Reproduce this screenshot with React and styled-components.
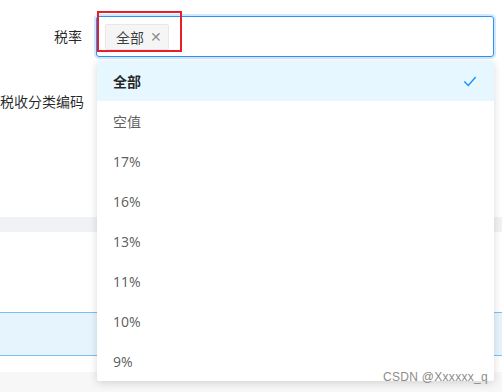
import React from 'react';
import styled, { createGlobalStyle } from 'styled-components';

const GlobalStyle = createGlobalStyle`
  html, body {
    margin: 0;
    padding: 0;
    background: #fff;
    overflow: hidden;
  }
  body {
    font-family: "Noto Sans", "Noto Sans CJK SC", sans-serif;
    font-size: 14px;
  }
`;

const Page = styled.div`
  position: relative;
  width: 502px;
  height: 392px;
  overflow: hidden;
  display: flex;
  flex-direction: column;
`;

const FormArea = styled.div`
  height: 218px;
  padding-top: 16px;
  box-sizing: border-box;
  display: flex;
  flex-direction: column;
  gap: 24px;
`;

const FormRow = styled.div`
  display: flex;
  align-items: center;
  gap: 14px;
  height: 41px;
`;

const Label = styled.div`
  width: 82px;
  flex: none;
  text-align: right;
  white-space: nowrap;
  color: rgba(0, 0, 0, 0.85);
  font-size: 14px;
  line-height: 22px;
`;

const SelectBox = styled.div`
  position: relative;
  width: 398px;
  height: 41px;
  box-sizing: border-box;
  border: 1px solid #2f8ff5;
  border-radius: 3px;
  box-shadow: 0 0 0 2px rgba(24, 144, 255, 0.2);
  display: flex;
  align-items: center;
  padding-left: 8px;
`;

const Tag = styled.span`
  display: inline-flex;
  align-items: center;
  gap: 6px;
  height: 26px;
  box-sizing: border-box;
  padding: 0 6px 0 10px;
  background: #f5f5f5;
  border: 1px solid #e8e8e8;
  border-radius: 2px;
  color: rgba(0, 0, 0, 0.75);
  font-size: 14px;
`;

const Close = styled.span`
  color: rgba(0, 0, 0, 0.45);
  font-size: 14px;
  line-height: 1;
`;

const Highlight = styled.div`
  position: absolute;
  left: 0;
  top: -6px;
  width: 85px;
  height: 41px;
  border: 2px solid #e5202a;
  box-sizing: border-box;
  pointer-events: none;
`;

const Band = styled.div`
  height: ${(p) => p.h}px;
  background: ${(p) => p.bg || '#fff'};
  flex: none;
`;

const ActiveRow = styled.div`
  height: 44px;
  box-sizing: border-box;
  background: #e6f4fd;
  border-top: 1px solid #7fbdf0;
  border-bottom: 1px solid #7fbdf0;
  flex: none;
`;

const Dropdown = styled.ul`
  position: absolute;
  left: 97px;
  top: 61px;
  width: 397px;
  margin: 0;
  padding: 0;
  list-style: none;
  background: #fff;
  border-radius: 3px;
  box-shadow: 0 2px 8px rgba(0, 0, 0, 0.15);
  overflow: hidden;
`;

const Option = styled.li`
  height: 40px;
  display: flex;
  align-items: center;
  justify-content: space-between;
  padding: 0 16px 0 16px;
  font-size: 14px;
  color: ${(p) => (p.selected ? 'rgba(0,0,0,0.85)' : 'rgba(0,0,0,0.65)')};
  font-weight: ${(p) => (p.selected ? 600 : 400)};
  background: ${(p) => (p.selected ? '#e6f7ff' : '#fff')};
`;

const Check = styled.svg`
  width: 14px;
  height: 14px;
  margin-right: 1px;
`;

const Watermark = styled.div`
  position: absolute;
  right: 14px;
  bottom: 8px;
  color: #8c8c8c;
  font-family: "Liberation Sans", Arial, sans-serif;
  font-size: 12px;
  letter-spacing: 0.3px;
`;

const options = ['全部', '空值', '17%', '16%', '13%', '11%', '10%', '9%'];

export default function App() {
  return (
    <Page>
      <GlobalStyle />
      <FormArea>
        <FormRow>
          <Label>税率</Label>
          <SelectBox>
            <Tag>
              全部
              <Close>✕</Close>
            </Tag>
            <Highlight />
          </SelectBox>
        </FormRow>
        <FormRow>
          <Label>税收分类编码</Label>
        </FormRow>
      </FormArea>
      <Band h={15} bg="#f0f2f5" />
      <Band h={80} />
      <ActiveRow />
      <Band h={16} />
      <Band h={20} bg="#f7f7f7" />

      <Dropdown>
        {options.map((o, i) => (
          <Option key={o} selected={i === 0}>
            <span>{o}</span>
            {i === 0 && (
              <Check viewBox="0 0 16 16" fill="none" stroke="#1890ff" strokeWidth="1.6">
                <path d="M1.5 8.5 L6 13 L14.5 3.5" />
              </Check>
            )}
          </Option>
        ))}
      </Dropdown>
      <Watermark>CSDN @Xxxxxx_q</Watermark>
    </Page>
  );
}
